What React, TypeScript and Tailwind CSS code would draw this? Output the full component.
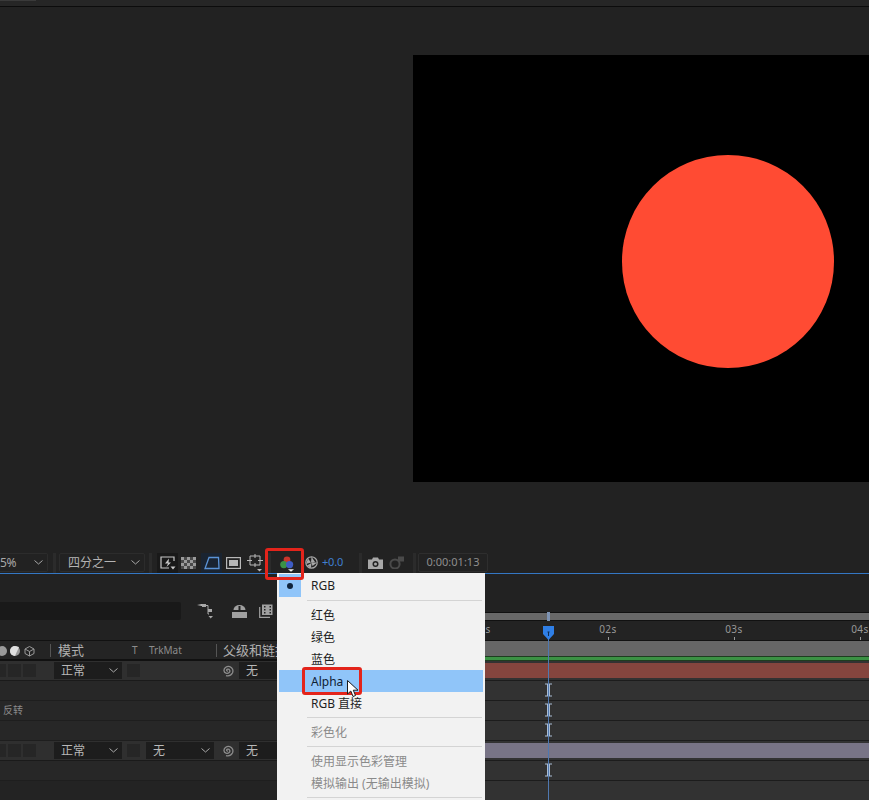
const font = "font-['Noto_Sans','Noto_Sans_CJK_SC',sans-serif]";

const Chevron = ({ className = "" }: { className?: string }) => (
  <svg width="9" height="5" viewBox="0 0 9 5" className={className}>
    <path d="M0.5 0.5 L4.5 4 L8.5 0.5" fill="none" stroke="#a8a8a8" strokeWidth="1" />
  </svg>
);

const Sep = ({ ml }: { ml: string }) => <div className={`h-[20px] w-[3px] shrink-0 bg-[#2b2b2b] ${ml}`} />;

const Spiral = () => (
  <svg width="13" height="13" viewBox="0 0 13 13" className="shrink-0">
    <path
      d="M7 7 C5.5 7.6 5 5.6 6.6 5.2 C8.6 4.8 9.6 7.2 8.2 8.6 C6.4 10.2 3.2 9.2 3 6.6 C2.8 3.6 6 1.8 8.8 2.6 C11.6 3.6 12.6 6.6 11.4 9 C10.2 11.2 7.6 12.2 5 11.6"
      fill="none"
      stroke="#8c8c8c"
      strokeWidth="1.3"
    />
  </svg>
);

const Toolbar = () => (
  <div className="flex h-[21px] shrink-0 items-center bg-[#222222] text-[12px] text-[#a8a8a8]">
    <div className="flex h-[19px] w-[48px] shrink-0 items-center justify-between rounded-r-[2px] border border-l-0 border-[#2c2c2c] pr-[4px]">
      <span className="tracking-[-0.3px]">5%</span>
      <Chevron />
    </div>
    <Sep ml="ml-[5px]" />
    <div className="ml-[3px] flex h-[19px] w-[86px] shrink-0 items-center justify-between rounded-[2px] border border-[#2c2c2c] pl-[8px] pr-[4px]">
      <span className="text-[#b4b4b4]">四分之一</span>
      <Chevron />
    </div>
    <Sep ml="ml-[4px]" />
    {/* snapshot flash */}
    <div className="ml-[5px] flex h-[20px] w-[21px] shrink-0 items-center justify-center bg-[#191919]">
      <svg width="16" height="14" viewBox="0 0 16 14">
        <path d="M14 5 V1 H1 V12 H9" fill="none" stroke="#c8c8c8" strokeWidth="1.2" />
        <path d="M9 2.5 L5 7.5 H8 L6.5 11 L11 6.5 H8.5 Z" fill="#c8c8c8" />
        <path d="M10.5 10.5 H15.5 L13 13.5 Z" fill="#c8c8c8" />
      </svg>
    </div>
    {/* transparency grid */}
    <svg width="15" height="12" viewBox="0 0 15 12" className="ml-[3px] shrink-0">
      <rect width="15" height="12" fill="#9a9a9a" />
      <path d="M3 0h3v3H3zM9 0h3v3H9zM0 3h3v3H0zM6 3h3v3H6zM12 3h3v3h-3zM3 6h3v3H3zM9 6h3v3H9zM0 9h3v3H0zM6 9h3v3H6zM12 9h3v3h-3z" fill="#4a4a4a" />
    </svg>
    {/* mask */}
    <div className="ml-[5px] flex h-[20px] w-[21px] shrink-0 items-center justify-center bg-[#1a2431]">
      <svg width="16" height="14" viewBox="0 0 16 14">
        <path d="M5 1.5 H14.5 L15 12.5 H1 Z" fill="none" stroke="#5b93d6" strokeWidth="1.3" />
      </svg>
    </div>
    {/* title safe */}
    <svg width="15" height="12" viewBox="0 0 15 12" className="ml-[4px] shrink-0">
      <rect x="0.6" y="0.6" width="13.8" height="10.8" fill="none" stroke="#b8b8b8" strokeWidth="1.2" />
      <rect x="3" y="3" width="9" height="6" fill="#b8b8b8" />
    </svg>
    {/* grid */}
    <svg width="16" height="18" viewBox="0 0 16 18" className="ml-[6px] shrink-0">
      <path d="M3 2 H13 V11 H3 Z" fill="none" stroke="#b8b8b8" strokeWidth="1" />
      <path d="M8 0 V4 M8 9 V13 M0 6.5 H5 M11 6.5 H16" stroke="#b8b8b8" strokeWidth="1" />
      <path d="M10 15 H15 L12.5 17.5 Z" fill="#b8b8b8" />
    </svg>
    <Sep ml="ml-[5px]" />
    {/* channel button, inside the red box */}
    <svg width="17" height="16" viewBox="0 0 17 16" className="ml-[9px] mt-[2px] shrink-0">
      <circle cx="7" cy="4" r="3.4" fill="#c8352c" />
      <circle cx="3.8" cy="8.6" r="3.6" fill="#3b9146" />
      <circle cx="9.6" cy="8.6" r="3.6" fill="#3e5cc4" />
      <path d="M8 13.2 H14 L11 15.8 Z" fill="#eeeeee" />
    </svg>
    {/* exposure reset */}
    <svg width="13" height="13" viewBox="0 0 13 13" className="ml-[8px] shrink-0">
      <circle cx="6.5" cy="6.5" r="5.7" fill="none" stroke="#a8a8a8" strokeWidth="1.2" />
      <path d="M6.5 0.8 L10 6 L6 6.5 Z M12.2 6.5 L7.5 10 L6.5 6.5 Z M1 8 L3 2.5 L6 6.5 Z M6 12 L2 9.5 L6.5 7 Z" fill="#a8a8a8" />
    </svg>
    <span className="ml-[4px] w-[21px] shrink-0 text-[11px] tracking-[-0.2px] text-[#3f7fd0]">+0.0</span>
    <Sep ml="ml-[16px]" />
    <svg width="15" height="12" viewBox="0 0 15 12" className="ml-[6px] shrink-0">
      <path d="M0 2.5 H4 L5 0.5 H10 L11 2.5 H15 V12 H0 Z" fill="#a8a8a8" />
      <circle cx="7.5" cy="7" r="3" fill="#222222" />
      <circle cx="7.5" cy="7" r="1.5" fill="#a8a8a8" />
    </svg>
    <svg width="16" height="13" viewBox="0 0 16 13" className="ml-[6px] shrink-0">
      <circle cx="6" cy="8" r="4.6" fill="none" stroke="#4a4a4a" strokeWidth="2" />
      <rect x="9" y="0.5" width="6" height="5" fill="#4a4a4a" />
    </svg>
    <Sep ml="ml-[8px]" />
    <div className="ml-[2px] flex h-[19px] w-[70px] shrink-0 items-center justify-center rounded-[2px] border border-[#2e2e2e] text-[11px] text-[#8e8e8e]">
      0:00:01:13
    </div>
  </div>
);

const Square = ({ className = "" }: { className?: string }) => (
  <div className={`h-[13px] shrink-0 bg-[#262626] ${className}`} />
);

const Select = ({ label, w, ml }: { label: string; w: string; ml: string }) => (
  <div className={`flex h-[17px] shrink-0 items-center justify-between bg-[#1d1d1d] pl-[7px] pr-[4px] text-[12px] text-[#b8b8b8] ${w} ${ml}`}>
    <span>{label}</span>
    <Chevron />
  </div>
);

const LayerRow = ({ matte }: { matte?: boolean }) => (
  <div className="flex h-[20px] items-center border-b border-[#1a1a1a] bg-[#2f2f2f]">
    <Square className="w-[6px]" />
    <Square className="ml-[2px] w-[13px]" />
    <Square className="ml-[2px] w-[13px]" />
    <Select label="正常" w="w-[68px]" ml="ml-[18px]" />
    <Square className="ml-[5px] w-[13px]" />
    {matte ? <Select label="无" w="w-[68px]" ml="ml-[6px]" /> : <div className="w-[74px] shrink-0" />}
    <div className="ml-[7px] shrink-0">
      <Spiral />
    </div>
    <div className="ml-[5px] flex h-[17px] flex-1 items-center bg-[#1d1d1d] pl-[7px] text-[12px] text-[#b8b8b8]">无</div>
  </div>
);

const SubRow = ({ label }: { label?: string }) => (
  <div className="flex h-[20px] items-center border-b border-[#1e1e1e] bg-[#272727] pl-[3px] text-[10px] text-[#8c8c8c]">
    {label}
  </div>
);

const LeftPanel = () => (
  <div className="w-[277px] shrink-0 overflow-hidden">
    <div className="flex h-[67px] items-center border-b border-[#111111] bg-[#222222] pt-[8px]">
      <div className="h-[18px] w-[181px] shrink-0 rounded-r-[2px] bg-[#191919]" />
      <svg width="17" height="16" viewBox="0 0 17 16" className="ml-[16px] shrink-0">
        <path d="M0 2 L5 1 V3 Z" fill="#c0c0c0" />
        <rect x="5" y="1" width="4" height="3" fill="#a8a8a8" />
        <path d="M9 2.5 H11 V11 M11 7.5 H12 M11 11 H12" fill="none" stroke="#a8a8a8" strokeWidth="1" />
        <rect x="11" y="6" width="4" height="3" fill="#a8a8a8" />
        <path d="M11.5 13 H16 L13.7 15.5 Z" fill="#a8a8a8" />
      </svg>
      <svg width="17" height="13" viewBox="0 0 17 13" className="ml-[17px] shrink-0">
        <path d="M2.5 5 A6 5 0 0 1 14.5 5 Z" fill="#a0a0a0" />
        <rect x="7.5" y="1" width="2" height="7" fill="#222222" />
        <rect x="1" y="7" width="15" height="6" fill="#a0a0a0" />
      </svg>
      <svg width="14" height="14" viewBox="0 0 14 14" className="ml-[11px] shrink-0">
        <rect x="3" y="0.5" width="10.5" height="10.5" fill="#a0a0a0" />
        <path d="M5 2h1.5v1.5H5zM5 5h1.5v1.5H5zM5 8h1.5v1.5H5zM10.5 2H12v1.5h-1.5zM10.5 5H12v1.5h-1.5zM10.5 8H12v1.5h-1.5z" fill="#222222" />
        <path d="M0.7 3 V13.3 H11" fill="none" stroke="#a0a0a0" strokeWidth="1.2" />
      </svg>
    </div>
    <div className="flex h-[20px] items-center border-b-2 border-[#111111] bg-[#242424] pt-[1px] text-[13px] text-[#b0b0b0]">
      <svg width="36" height="12" viewBox="0 0 36 12" className="shrink-0">
        <circle cx="2" cy="6" r="5" fill="#9a9a9a" />
        <circle cx="15" cy="6" r="5" fill="#9a9a9a" />
        <path d="M15 1 A5 5 0 0 0 15 11 L19 2 Z" fill="#e0e0e0" />
        <path d="M29.5 1.5 L34 4 V8.5 L29.5 11 L25 8.5 V4 Z M25 4 L29.5 6.5 L34 4 M29.5 6.5 V11" fill="none" stroke="#9a9a9a" strokeWidth="1" />
      </svg>
      <div className="ml-[14px] h-[13px] w-px shrink-0 bg-[#555555]" />
      <span className="ml-[7px] w-[74px] shrink-0">模式</span>
      <span className="w-[17px] shrink-0 text-[10px] text-[#8c8c8c]">T</span>
      <span className="w-[35px] shrink-0 text-[10px] text-[#8c8c8c]">TrkMat</span>
      <div className="ml-[32px] h-[13px] w-px shrink-0 bg-[#555555]" />
      <span className="ml-[6px] shrink-0 whitespace-nowrap">父级和链接</span>
    </div>
    <LayerRow />
    <SubRow />
    <SubRow label="反转" />
    <SubRow />
    <LayerRow matte />
    <SubRow />
    <div className="h-[20px] bg-[#232323]" />
  </div>
);

const ticks = ["01s", "02s", "03s", "04s"];

const Beam = () => (
  <svg width="7" height="14" viewBox="0 0 7 14" className="ml-[60px] mt-[-2px]">
    <path d="M0 1 H7 M0 13 H7 M2.5 1 V13 M4.5 1 V13" fill="none" stroke="#a9bcd4" strokeWidth="1" />
  </svg>
);

const TrackRow = ({ beam }: { beam?: boolean }) => (
  <div className="flex h-[20px] items-center border-b border-[#1c1c1c] bg-[#323232]">{beam && <Beam />}</div>
);

const Tracks = () => (
  <div className="flex-1 overflow-hidden">
    <div className="h-[38px] bg-[#222222]" />
    <div className="h-[9px] border-y border-[#111111] bg-[#686868]" />
    <div className="ml-[-66px] flex h-[20px] w-[600px] border-b border-[#111111] bg-[#232323]">
      {ticks.map((t) => (
        <div key={t} className="flex w-[126px] flex-col items-center pt-[1px]">
          <span className="text-[10px] leading-[14px] tracking-[0.5px] text-[#989898]">{t}</span>
          <div className="mt-[1px] h-[4px] w-px bg-[#989898]" />
        </div>
      ))}
    </div>
    <div className="h-[15px] bg-[#666666]" />
    <div className="h-[5px] border-y border-[#1d3d1f] bg-[#3b9144]" />
    <div className="flex h-[20px] flex-col border-b border-[#1c1c1c] bg-[#323232] py-[2px]">
      <div className="flex-1 bg-[#84453e]" />
    </div>
    <TrackRow beam />
    <TrackRow beam />
    <TrackRow beam />
    <div className="flex h-[20px] flex-col border-b border-[#1c1c1c] bg-[#323232] py-[2px]">
      <div className="flex-1 bg-[#787486]" />
    </div>
    <TrackRow beam />
    <TrackRow />
  </div>
);

const MenuItem = ({ label, dim, active }: { label: string; dim?: boolean; active?: boolean }) => (
  <div className={`flex h-[22px] items-center pl-[32px] pt-[1px] text-[12px] ${active ? "bg-[#90c5f9] text-[#0f2033]" : dim ? "text-[#8a8a8a]" : "text-[#1e1e1e]"}`}>
    {label}
  </div>
);

const MenuSep = () => <div className="ml-[28px] mr-[1px] h-px bg-[#d4d4d4]" />;

const ChannelMenu = () => (
  <div className="absolute left-[277px] top-[573px] h-[227px] w-[208px] bg-[#f2f2f2] px-[2px] pt-[1px]">
    <div className="flex h-[23px] items-center">
      <div className="flex h-[23px] w-[22px] items-center justify-center bg-[#90c5f9]">
        <div className="h-[6px] w-[6px] rounded-full bg-[#10243c]" />
      </div>
      <span className="ml-[10px] text-[12px] text-[#1e1e1e]">RGB</span>
    </div>
    <div className="mt-[3px]">
      <MenuSep />
    </div>
    <div className="mt-[3px]">
      <MenuItem label="红色" />
      <MenuItem label="绿色" />
      <MenuItem label="蓝色" />
      <MenuItem label="Alpha" active />
      <MenuItem label="RGB 直接" />
    </div>
    <div className="mt-[3px]">
      <MenuSep />
    </div>
    <div className="mt-[3px]">
      <MenuItem label="彩色化" dim />
    </div>
    <div className="mt-[3px]">
      <MenuSep />
    </div>
    <div className="mt-[3px]">
      <MenuItem label="使用显示色彩管理" dim />
      <MenuItem label="模拟输出 (无输出模拟)" dim />
    </div>
    <div className="mt-[3px]">
      <MenuSep />
    </div>
  </div>
);

export default function App() {
  return (
    <div className={`relative flex h-[800px] w-[869px] flex-col overflow-hidden bg-[#222222] ${font}`}>
      {/* top strip */}
      <div className="h-[7px] shrink-0 border-b border-[#0c0c0c] bg-[#262626]">
        <div className="h-px w-[36px] bg-[#3a3a3a]" />
      </div>

      {/* viewer */}
      <div className="h-[545px] shrink-0 pl-[413px] pt-[48px]">
        <div className="h-[427px] bg-black pl-[209px] pt-[100px]">
          <div className="h-[213px] w-[212px] rounded-full bg-[#ff4b33]" />
        </div>
      </div>

      <Toolbar />
      <div className="h-px shrink-0 bg-[#3477c4]" />

      {/* timeline */}
      <div className="flex flex-1">
        <LeftPanel />
        <div className="w-[208px] shrink-0" />
        <Tracks />
      </div>

      {/* playhead */}
      <div className="absolute left-[548px] top-[612px] h-[9px] w-[3px] -translate-x-px bg-[#7d93b3]" />
      <div className="absolute left-[548px] top-[638px] h-[162px] w-px bg-[#4f78b0]" />
      <svg width="11" height="14" viewBox="0 0 11 14" className="absolute left-[543px] top-[626px]">
        <path d="M0 0 H11 V8 L5.5 14 L0 8 Z" fill="#2f7fe6" />
        <path d="M4.5 6 H6.5 M5.5 6 V10" stroke="#0f2a50" strokeWidth="1" />
      </svg>

      <ChannelMenu />

      {/* annotations */}
      <div className="absolute left-[265px] top-[548px] h-[32px] w-[39px] rounded-[3px] border-[3px] border-[#e3241b]" />
      <div className="absolute left-[302px] top-[667px] h-[28px] w-[60px] rounded-[3px] border-[3px] border-[#e3241b]" />
      <svg width="13" height="18" viewBox="0 0 13 18" className="absolute left-[347px] top-[680px]">
        <path d="M0.5 0.5 V14 L3.8 11 L6 16.5 L8.5 15.5 L6.3 10.2 H11 Z" fill="#ffffff" stroke="#1a1a1a" strokeWidth="1" />
      </svg>
    </div>
  );
}
